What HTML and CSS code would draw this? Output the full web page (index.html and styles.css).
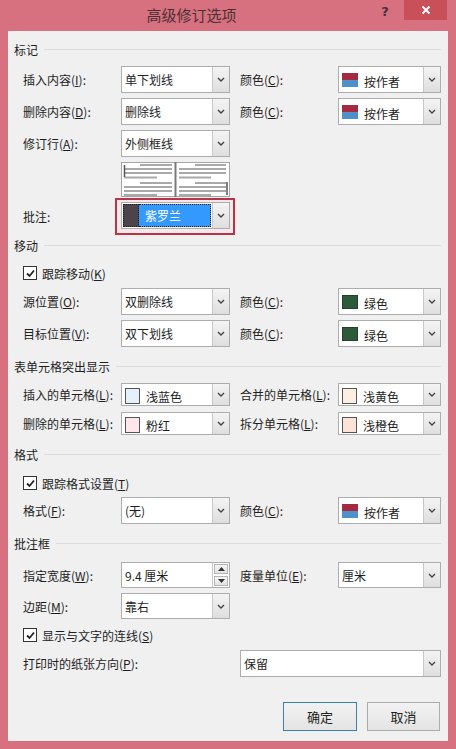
FILE: index.html
```html
<!DOCTYPE html>
<html lang="zh-CN">
<head>
<meta charset="utf-8">
<title>高级修订选项</title>
<link rel="stylesheet" href="styles.css">
</head>
<body>
<div class="window">
  <div class="titlebar">
    <div class="title">高级修订选项</div>
    <div class="help">?</div>
    <div class="close"><svg width="10" height="10" viewBox="0 0 10 10"><path d="M1.5 1.5 L8.5 8.5 M8.5 1.5 L1.5 8.5" stroke="#fff" stroke-width="2"/></svg></div>
  </div>
  <div class="panel">
    <div class="hdr">标记</div>

    <div class="row r27 mt7">
      <div class="lbl">插入内容(<u>I</u>):</div>
      <div class="sel"><span class="val">单下划线</span><span class="dd"><svg width="8" height="5" viewBox="0 0 8 5"><path d="M1 1 L4 4 L7 1" fill="none" stroke="#444" stroke-width="1.4"/></svg></span></div>
      <div></div>
      <div class="lbl">颜色(<u>C</u>):</div>
      <div class="sel"><span class="val"><span class="sw author"></span><span class="ctext">按作者</span></span><span class="dd"><svg width="8" height="5" viewBox="0 0 8 5"><path d="M1 1 L4 4 L7 1" fill="none" stroke="#444" stroke-width="1.4"/></svg></span></div>
    </div>

    <div class="row r27 mt5">
      <div class="lbl">删除内容(<u>D</u>):</div>
      <div class="sel"><span class="val">删除线</span><span class="dd"><svg width="8" height="5" viewBox="0 0 8 5"><path d="M1 1 L4 4 L7 1" fill="none" stroke="#444" stroke-width="1.4"/></svg></span></div>
      <div></div>
      <div class="lbl">颜色(<u>C</u>):</div>
      <div class="sel"><span class="val"><span class="sw author"></span><span class="ctext">按作者</span></span><span class="dd"><svg width="8" height="5" viewBox="0 0 8 5"><path d="M1 1 L4 4 L7 1" fill="none" stroke="#444" stroke-width="1.4"/></svg></span></div>
    </div>

    <div class="row r27 mt5">
      <div class="lbl">修订行(<u>A</u>):</div>
      <div class="sel"><span class="val">外侧框线</span><span class="dd"><svg width="8" height="5" viewBox="0 0 8 5"><path d="M1 1 L4 4 L7 1" fill="none" stroke="#444" stroke-width="1.4"/></svg></span></div>
    </div>

    <div class="row r35 mt5">
      <div></div>
      <div class="preview">
        <svg width="109" height="35" viewBox="0 0 109 35">
          <rect x="0.5" y="0.5" width="108" height="34" fill="#fff" stroke="#a6a6a6"/>
          <rect x="53.5" y="0" width="2" height="35" fill="#7a7a7a"/>
          <g stroke="#a9a9a9" stroke-width="2">
            <path d="M19 3 H51 M3 7 H51 M3 11 H51 M3 15.5 H36 M19 21 H51 M3 25 H51 M3 29 H51 M3 33 H36"/>
            <path d="M74 3 H105 M58 7 H105 M58 11 H105 M58 15.5 H90 M74 21 H105 M58 25 H105 M58 29 H105 M58 33 H90"/>
          </g>
          <path d="M3.5 3 V15" stroke="#555" stroke-width="1.5"/>
          <path d="M106 20 V33" stroke="#555" stroke-width="1.5"/>
        </svg>
      </div>
    </div>

    <div class="row r37 mt1">
      <div class="lbl">批注:</div>
      <div class="hilite">
        <div class="sel">
          <span class="val sel-on"><span class="sw dark"></span><span class="picked">紫罗兰</span></span>
          <span class="dd"><svg width="8" height="5" viewBox="0 0 8 5"><path d="M1 1 L4 4 L7 1" fill="none" stroke="#444" stroke-width="1.4"/></svg></span>
        </div>
      </div>
    </div>

    <div class="hdr">移动</div>

    <div class="chk mt8"><span class="box"><svg width="11" height="11" viewBox="0 0 11 11"><path d="M2 5.5 L4.5 8 L9 2.5" fill="none" stroke="#222" stroke-width="1.8"/></svg></span><span class="ctxt">跟踪移动(<u>K</u>)</span></div>

    <div class="row r27 mt5">
      <div class="lbl">源位置(<u>O</u>):</div>
      <div class="sel"><span class="val">双删除线</span><span class="dd"><svg width="8" height="5" viewBox="0 0 8 5"><path d="M1 1 L4 4 L7 1" fill="none" stroke="#444" stroke-width="1.4"/></svg></span></div>
      <div></div>
      <div class="lbl">颜色(<u>C</u>):</div>
      <div class="sel"><span class="val"><span class="sw green"></span><span class="ctext">绿色</span></span><span class="dd"><svg width="8" height="5" viewBox="0 0 8 5"><path d="M1 1 L4 4 L7 1" fill="none" stroke="#444" stroke-width="1.4"/></svg></span></div>
    </div>

    <div class="row r27 mt5">
      <div class="lbl">目标位置(<u>V</u>):</div>
      <div class="sel"><span class="val">双下划线</span><span class="dd"><svg width="8" height="5" viewBox="0 0 8 5"><path d="M1 1 L4 4 L7 1" fill="none" stroke="#444" stroke-width="1.4"/></svg></span></div>
      <div></div>
      <div class="lbl">颜色(<u>C</u>):</div>
      <div class="sel"><span class="val"><span class="sw green"></span><span class="ctext">绿色</span></span><span class="dd"><svg width="8" height="5" viewBox="0 0 8 5"><path d="M1 1 L4 4 L7 1" fill="none" stroke="#444" stroke-width="1.4"/></svg></span></div>
    </div>

    <div class="hdr mt9">表单元格突出显示</div>

    <div class="row r23 mt7">
      <div class="lbl">插入的单元格(<u>L</u>):</div>
      <div class="sel"><span class="val"><span class="sw cell lblue"></span><span class="ctext">浅蓝色</span></span><span class="dd"><svg width="8" height="5" viewBox="0 0 8 5"><path d="M1 1 L4 4 L7 1" fill="none" stroke="#444" stroke-width="1.4"/></svg></span></div>
      <div></div>
      <div class="lbl">合并的单元格(<u>L</u>):</div>
      <div class="sel"><span class="val"><span class="sw cell lyellow"></span><span class="ctext">浅黄色</span></span><span class="dd"><svg width="8" height="5" viewBox="0 0 8 5"><path d="M1 1 L4 4 L7 1" fill="none" stroke="#444" stroke-width="1.4"/></svg></span></div>
    </div>

    <div class="row r23 mt6">
      <div class="lbl">删除的单元格(<u>L</u>):</div>
      <div class="sel"><span class="val"><span class="sw cell pink"></span><span class="ctext">粉红</span></span><span class="dd"><svg width="8" height="5" viewBox="0 0 8 5"><path d="M1 1 L4 4 L7 1" fill="none" stroke="#444" stroke-width="1.4"/></svg></span></div>
      <div></div>
      <div class="lbl">拆分单元格(<u>L</u>):</div>
      <div class="sel"><span class="val"><span class="sw cell lorange"></span><span class="ctext">浅橙色</span></span><span class="dd"><svg width="8" height="5" viewBox="0 0 8 5"><path d="M1 1 L4 4 L7 1" fill="none" stroke="#444" stroke-width="1.4"/></svg></span></div>
    </div>

    <div class="hdr mt9">格式</div>

    <div class="chk mt9"><span class="box"><svg width="11" height="11" viewBox="0 0 11 11"><path d="M2 5.5 L4.5 8 L9 2.5" fill="none" stroke="#222" stroke-width="1.8"/></svg></span><span class="ctxt">跟踪格式设置(<u>T</u>)</span></div>

    <div class="row r27 mt4">
      <div class="lbl">格式(<u>F</u>):</div>
      <div class="sel"><span class="val">(无)</span><span class="dd"><svg width="8" height="5" viewBox="0 0 8 5"><path d="M1 1 L4 4 L7 1" fill="none" stroke="#444" stroke-width="1.4"/></svg></span></div>
      <div></div>
      <div class="lbl">颜色(<u>C</u>):</div>
      <div class="sel"><span class="val"><span class="sw author"></span><span class="ctext">按作者</span></span><span class="dd"><svg width="8" height="5" viewBox="0 0 8 5"><path d="M1 1 L4 4 L7 1" fill="none" stroke="#444" stroke-width="1.4"/></svg></span></div>
    </div>

    <div class="hdr mt9">批注框</div>

    <div class="row r26 mt9">
      <div class="lbl">指定宽度(<u>W</u>):</div>
      <div class="sel"><span class="val">9.4 厘米</span><span class="spin"><span class="sb"><svg width="7" height="4" viewBox="0 0 7 4"><path d="M0 4 L3.5 0 L7 4 Z" fill="#333"/></svg></span><span class="sb"><svg width="7" height="4" viewBox="0 0 7 4"><path d="M0 0 L3.5 4 L7 0 Z" fill="#333"/></svg></span></span></div>
      <div></div>
      <div class="lbl">度量单位(<u>E</u>):</div>
      <div class="sel"><span class="val">厘米</span><span class="dd"><svg width="8" height="5" viewBox="0 0 8 5"><path d="M1 1 L4 4 L7 1" fill="none" stroke="#444" stroke-width="1.4"/></svg></span></div>
    </div>

    <div class="row r26 mt5">
      <div class="lbl">边距(<u>M</u>):</div>
      <div class="sel"><span class="val">靠右</span><span class="dd"><svg width="8" height="5" viewBox="0 0 8 5"><path d="M1 1 L4 4 L7 1" fill="none" stroke="#444" stroke-width="1.4"/></svg></span></div>
    </div>

    <div class="chk mt6"><span class="box"><svg width="11" height="11" viewBox="0 0 11 11"><path d="M2 5.5 L4.5 8 L9 2.5" fill="none" stroke="#222" stroke-width="1.8"/></svg></span><span class="ctxt">显示与文字的连线(<u>S</u>)</span></div>

    <div class="row wide r27 mt5">
      <div class="lbl">打印时的纸张方向(<u>P</u>):</div>
      <div class="sel"><span class="val">保留</span><span class="dd"><svg width="8" height="5" viewBox="0 0 8 5"><path d="M1 1 L4 4 L7 1" fill="none" stroke="#444" stroke-width="1.4"/></svg></span></div>
    </div>

    <div class="buttons">
      <div class="btn default">确定</div>
      <div class="btn">取消</div>
    </div>
  </div>
</div>
</body>
</html>
```

FILE: styles.css
```css
html, body {
  margin: 0;
  padding: 0;
  width: 456px;
  height: 749px;
  overflow: hidden;
}
body {
  font-family: "Noto Sans CJK SC", "Microsoft YaHei", sans-serif;
  font-size: 12px;
  color: #1e1e1e;
}
u { text-decoration: underline; text-underline-offset: 1px; }

.window {
  width: 456px;
  height: 749px;
  background: #d8717f;
  display: flex;
  flex-direction: column;
}
.titlebar {
  height: 31px;
  flex: none;
  display: flex;
  align-items: flex-start;
}
.title {
  flex: 1;
  text-align: center;
  font-size: 15px;
  line-height: 30px;
  color: #4a3036;
  padding-left: 8px;
}
.help {
  width: 20px;
  line-height: 24px;
  font-size: 13px;
  font-weight: bold;
  color: #4a3036;
  font-family: "DejaVu Sans", sans-serif;
  margin-right: 9px;
  text-align: center;
}
.close {
  width: 43px;
  height: 20px;
  background: #c94f58;
  margin-right: 9px;
  display: flex;
  align-items: center;
  justify-content: center;
}

.panel {
  margin: 0 8px;
  height: 710px;
  background: #f0f0f0;
  padding-top: 8px;
  box-sizing: border-box;
  display: flex;
  flex-direction: column;
}

.hdr {
  height: 20px;
  flex: none;
  display: flex;
  align-items: center;
  gap: 6px;
  padding-left: 6px;
  padding-right: 7px;
  color: #1e1e1e;
}
.hdr::after {
  content: "";
  flex: 1;
  height: 1px;
  background: #dcdcdc;
  margin-top: 1px;
}

.row {
  flex: none;
  display: grid;
  grid-template-columns: 98px 109px 10px 98px 103px;
  padding-left: 15px;
  align-items: stretch;
}
.row.wide {
  grid-template-columns: 217px 201px;
}
.r23 { height: 23px; }
.r26 { height: 26px; }
.r27 { height: 27px; }
.r35 { height: 35px; }
.r37 { height: 37px; }
.mt1 { margin-top: 1px; }
.mt4 { margin-top: 4px; }
.mt5 { margin-top: 5px; }
.mt6 { margin-top: 6px; }
.mt7 { margin-top: 7px; }
.mt8 { margin-top: 8px; }
.mt9 { margin-top: 9px; }

.lbl {
  display: flex;
  align-items: center;
  white-space: nowrap;
}

.sel {
  display: flex;
  border: 1px solid #adadad;
  background: #fff;
  box-sizing: border-box;
  height: 100%;
}
.val {
  flex: 1;
  display: flex;
  align-items: center;
  padding-left: 3px;
  white-space: nowrap;
  min-width: 0;
}
.dd {
  width: 16px;
  flex: none;
  border-left: 1px solid #c8c8c8;
  background: linear-gradient(#f4f4f4, #dedede);
  display: flex;
  align-items: center;
  justify-content: center;
}

.sw {
  width: 16px;
  height: 14px;
  flex: none;
  margin-right: 6px;
  box-sizing: border-box;
}
.sw.author {
  background: linear-gradient(#a52a40 0, #a52a40 50%, #4f8fca 50%, #4f8fca 100%);
}
.sw.green {
  background: #2f5a3a;
  border: 1px solid #25402c;
}
.sw.cell {
  width: 15px;
  height: 16px;
  border: 1px solid #555;
  margin-top: 2px;
}
.sw.lblue { background: #e3f1fd; }
.sw.lyellow { background: #fdeee2; }
.sw.pink { background: #fde7ec; }
.sw.lorange { background: #fde3d7; }
.ctext { margin-top: 3px; }

.preview {
  display: flex;
}

.hilite {
  margin-left: -6px;
  margin-right: -5px;
  border: 2px solid #b83548;
  padding: 2px 3px 4px 4px;
  background: #f7e9eb;
}
.sel-on {
  padding: 1px;
}
.sw.dark {
  width: 16px;
  height: 23px;
  background: #4b444b;
  margin-right: 0;
  border: 1px dotted #222;
}
.picked {
  flex: 1;
  align-self: stretch;
  background: #3399ff;
  color: #fff;
  display: flex;
  align-items: center;
  padding-left: 6px;
  border: 1px dotted #1a1a1a;
  border-left: none;
}

.chk {
  height: 20px;
  flex: none;
  display: flex;
  align-items: center;
  padding-left: 15px;
  gap: 5px;
}
.ctxt {
  white-space: nowrap;
}
.box {
  width: 12px;
  height: 12px;
  border: 1px solid #333;
  background: #fff;
  display: flex;
  align-items: center;
  justify-content: center;
}

.spin {
  width: 16px;
  flex: none;
  border-left: 1px solid #c8c8c8;
  display: flex;
  flex-direction: column;
}
.sb {
  flex: 1;
  display: flex;
  align-items: center;
  justify-content: center;
  background: linear-gradient(#f6f6f6, #e2e2e2);
  border: 1px solid #b5b5b5;
  margin: 1px;
}

.buttons {
  flex: none;
  margin-top: 25px;
  display: flex;
  justify-content: flex-end;
  gap: 10px;
  padding-right: 8px;
}
.btn {
  width: 73px;
  height: 29px;
  box-sizing: border-box;
  border: 1px solid #acacac;
  background: linear-gradient(#f2f2f2, #e4e4e4);
  display: flex;
  align-items: center;
  justify-content: center;
  font-size: 13px;
}
.btn.default {
  width: 74px;
  border-color: #3c7fb1;
}
```
